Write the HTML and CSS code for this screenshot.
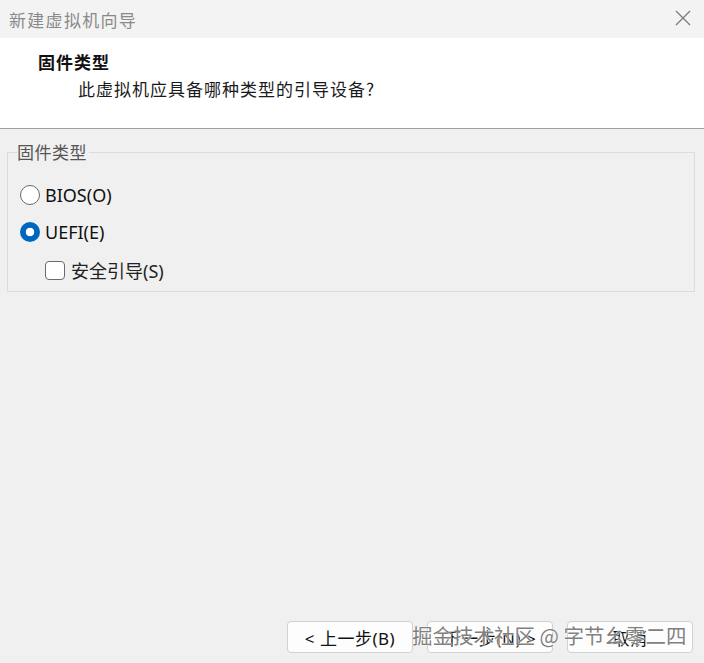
FILE: index.html
```html
<!DOCTYPE html>
<html lang="zh">
<head>
<meta charset="utf-8">
<title>新建虚拟机向导</title>
<link rel="stylesheet" href="styles.css">
</head>
<body>
<div class="window">
  <div class="titlebar">
    <span class="title">新建虚拟机向导</span>
    <svg class="close" width="16" height="16" viewBox="0 0 16 16"><path d="M1 1L15 15M15 1L1 15" stroke="#7a7a7a" stroke-width="1.3" fill="none"/></svg>
  </div>
  <div class="header">
    <div class="h-title">固件类型</div>
    <div class="h-sub">此虚拟机应具备哪种类型的引导设备?</div>
  </div>
  <div class="content">
    <fieldset class="group">
      <legend class="legend">固件类型</legend>
      <div class="option">
        <span class="radio"></span><span class="label">BIOS(O)</span>
      </div>
      <div class="option">
        <span class="radio checked"></span><span class="label">UEFI(E)</span>
      </div>
      <div class="option sub">
        <span class="checkbox"></span><span class="label cjk">安全引导(S)</span>
      </div>
    </fieldset>
  </div>
  <div class="footer">
    <button class="btn">&lt; 上一步(B)</button>
    <button class="btn">下一步(N) &gt;</button>
    <button class="btn">取消</button>
    <div class="watermark">掘金技术社区 @ 字节幺零二四</div>
  </div>
</div>
</body>
</html>
```
FILE: styles.css
```css
html, body {
  margin: 0;
  padding: 0;
}
body {
  width: 704px;
  height: 663px;
  background: #f0f0f0;
  font-family: "Noto Sans", "Noto Sans CJK SC", sans-serif;
  overflow: hidden;
}
.window {
  display: flex;
  flex-direction: column;
  height: 663px;
  position: relative;
}
.titlebar {
  height: 38px;
  display: flex;
  align-items: center;
  justify-content: space-between;
  padding: 0 13px 0 9px;
  background: #f3f3f3;
  flex: none;
}
.title {
  font-family: "Noto Sans CJK SC", sans-serif;
  font-size: 17px;
  color: #8a8a8a;
  letter-spacing: 1.3px;
}
.close {
  margin-top: -2px;
}
.header {
  height: 91px;
  background: #ffffff;
  border-bottom: 1px solid #a0a0a0;
  flex: none;
  box-sizing: border-box;
  padding: 11px 0 0 38px;
}
.h-title {
  font-family: "Noto Sans CJK SC", sans-serif;
  font-weight: 700;
  font-size: 17px;
  line-height: 25px;
  color: #111;
  letter-spacing: 1px;
}
.h-sub {
  font-family: "Noto Sans CJK SC", sans-serif;
  font-size: 17px;
  line-height: 25px;
  margin-top: 2px;
  padding-left: 40px;
  color: #1a1a1a;
  letter-spacing: 1px;
}
.content {
  flex: 1;
  padding: 13px 9px 0 7px;
}
.group {
  margin: 0;
  padding: 14px 0 6px 12px;
  border: 1px solid #dcdcdc;
  height: 150px;
  box-sizing: border-box;
}
.legend {
  font-family: "Noto Sans CJK SC", sans-serif;
  font-size: 17px;
  color: #555;
  padding: 0 2px 0 0;
  margin-left: -3px;
  line-height: 20px;
  letter-spacing: 0.5px;
}
.option {
  display: flex;
  align-items: center;
  height: 37px;
}
.option.sub {
  padding-left: 25px;
  height: 40px;
}
.radio {
  width: 18px;
  height: 18px;
  border: 1px solid #6a6a6a;
  border-radius: 50%;
  background: #fff;
  box-sizing: content-box;
  flex: none;
}
.radio.checked {
  width: 20px;
  height: 20px;
  border: none;
  background: radial-gradient(circle, #ffffff 0 4px, #0067c0 4.6px);
}
.checkbox {
  width: 18px;
  height: 17px;
  border: 1px solid #6a6a6a;
  border-radius: 4px;
  background: #fff;
  flex: none;
}
.label {
  font-size: 18px;
  color: #111;
  margin-left: 5px;
}
.label.cjk {
  margin-left: 6px;
  color: #222;
}
.footer {
  flex: none;
  height: 52px;
  box-sizing: border-box;
  padding-top: 10px;
  display: flex;
  justify-content: flex-end;
  align-items: flex-start;
  gap: 14px;
  padding-right: 11px;
  position: relative;
}
.btn {
  width: 126px;
  height: 32px;
  background: #fdfdfd;
  border: 1px solid #d0d0d0;
  border-radius: 4px;
  font-family: "Noto Sans", "Noto Sans CJK SC", sans-serif;
  font-size: 17px;
  letter-spacing: 0.5px;
  color: #111;
  padding: 0;
}
.watermark {
  position: absolute;
  left: 412px;
  top: 9px;
  font-family: "Noto Sans CJK SC", sans-serif;
  font-size: 20.5px;
  color: rgba(105, 105, 105, 0.85);
  text-shadow: 0 0 2px #fff, 0 0 1px #fff;
  white-space: nowrap;
}
```
